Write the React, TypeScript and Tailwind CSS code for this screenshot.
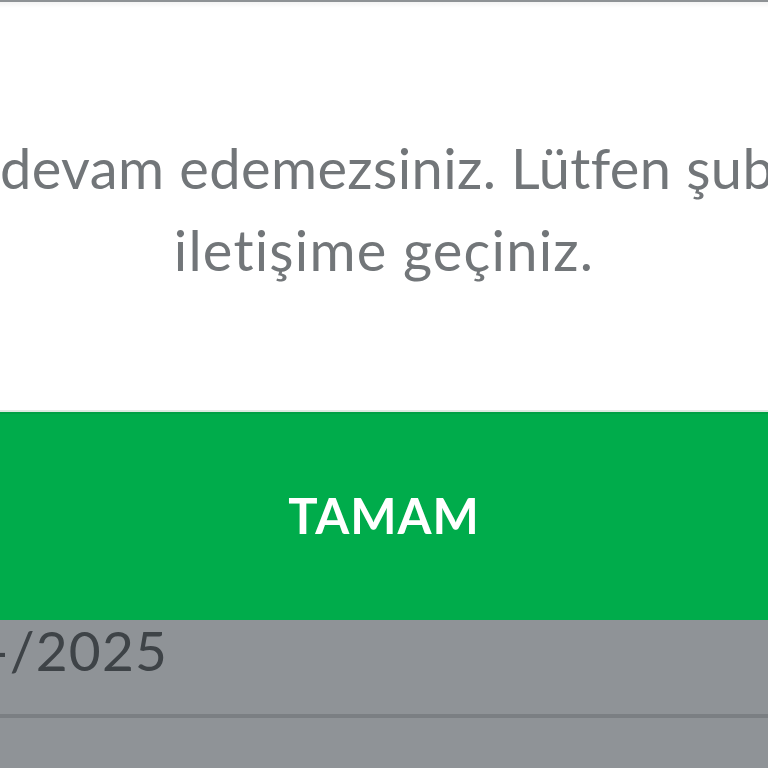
import React from "react";

export default function App() {
  return (
    <div className="w-[768px] h-[768px] overflow-hidden flex flex-col bg-white" style={{ fontFamily: "Lato, 'Noto Sans', sans-serif", fontVariantLigatures: "none" }}>
      <div className="h-[2px] bg-[#8e9295]" />
      <div className="h-[6px] bg-gradient-to-b from-[#f3f3f3] to-white" />
      <div className="flex-1 flex flex-col bg-white text-[#727679] text-[56px] leading-[82px] pt-[119px]">
        <div className="whitespace-nowrap overflow-hidden tracking-[0.4px]">devam edemezsiniz. Lütfen şubemizle</div>
        <div className="whitespace-nowrap text-center tracking-[1.2px]">iletişime geçiniz.</div>
      </div>
      <div className="h-[2px] bg-[#dfe9e2]" />
      <div className="h-[208px] bg-[#00ac4b] border-t-2 border-[#00a044] flex items-center justify-center">
        <span className="text-white font-bold text-[49px] tracking-[1px] mb-[2px]">TAMAM</span>
      </div>
      <div className="h-[148px] bg-[#8f9397] flex flex-col">
        <div className="h-[94px] flex items-start">
          <span className="text-[#3e4347] text-[55px] leading-none tracking-[1.2px] whitespace-nowrap ml-[-12px] mt-[3px]">-/2025</span>
        </div>
        <div className="h-[4px] bg-[#7b7f83]" />
        <div className="flex-1" />
      </div>
    </div>
  );
}
